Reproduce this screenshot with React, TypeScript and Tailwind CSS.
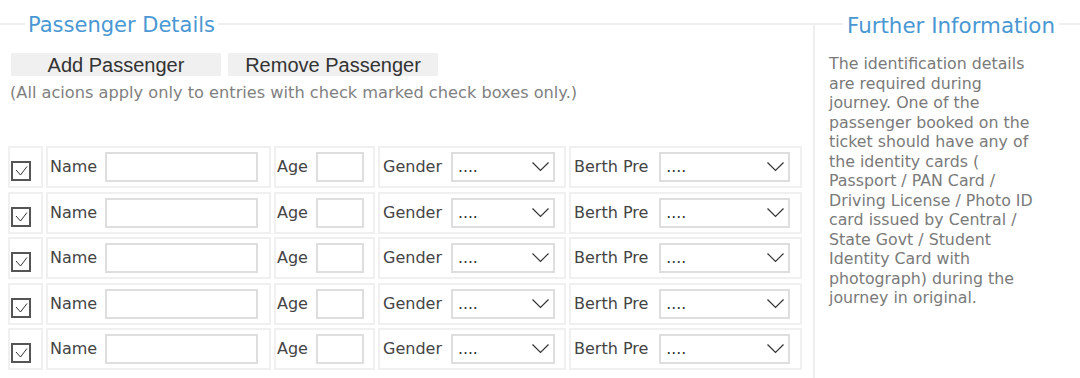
import React from "react";

const Check = () => (
  <svg width="20" height="20" viewBox="0 0 20 20" className="block">
    <rect x="1" y="1" width="18" height="18" fill="#fff" stroke="#555" strokeWidth="2" />
    <path d="M5 9 L9.5 14 L16 5.5" fill="none" stroke="#333" strokeWidth="1" />
  </svg>
);

const Chevron = () => (
  <svg width="17" height="10" viewBox="0 0 17 10" className="block">
    <path d="M0.5 0.5 L8.5 8.5 L16.5 0.5" fill="none" stroke="#333" strokeWidth="1.2" />
  </svg>
);

const Select = ({ w }: { w: string }) => (
  <div className={`${w} h-[30px] border-2 border-[#dedede] bg-white flex items-center justify-between pl-[5px] pr-[4px]`}>
    <span className="text-[15.6px] leading-none text-[#333] pt-[2px]">....</span>
    <Chevron />
  </div>
);

const Row = () => (
  <div className="flex gap-[3px] h-[42px]">
    <div className="w-[35px] border-2 border-[#f0f0f0] pl-[1px] pt-[13px]">
      <Check />
    </div>
    <div className="w-[225px] border-2 border-[#f0f0f0] flex items-center pl-[2px] gap-[8px]">
      <span>Name</span>
      <div className="w-[153px] h-[30px] border-2 border-[#dedede] bg-white" />
    </div>
    <div className="w-[101px] border-2 border-[#f0f0f0] flex items-center pl-[1px] gap-[8px]">
      <span>Age</span>
      <div className="w-[48px] h-[30px] border-2 border-[#dedede] bg-white" />
    </div>
    <div className="w-[188px] border-2 border-[#f0f0f0] flex items-center pl-[3px] gap-[9px]">
      <span>Gender</span>
      <Select w="w-[104px]" />
    </div>
    <div className="w-[233px] border-2 border-[#f0f0f0] flex items-center pl-[3px] gap-[11px]">
      <span>Berth Pre</span>
      <Select w="w-[131px]" />
    </div>
  </div>
);

const info = [
  "The identification details",
  "are required during",
  "journey. One of the",
  "passenger booked on the",
  "ticket should have any of",
  "the identity cards (",
  "Passport / PAN Card /",
  "Driving License / Photo ID",
  "card issued by Central /",
  "State Govt / Student",
  "Identity Card with",
  "photograph) during the",
  "journey in original.",
];

export default function App() {
  return (
    <div
      className="w-[1080px] h-[378px] overflow-hidden bg-white flex items-start"
      style={{ fontFamily: '"DejaVu Sans", Verdana, sans-serif' }}
    >
      <fieldset className="w-[813px] h-[400px] mt-[11px] border-t-2 border-[#efefef] min-w-0">
        <legend className="ml-[25px] px-[3px] pt-[4px] h-[25px] text-[21px] leading-[21px] text-[#4a98d3]">
          Passenger Details
        </legend>
        <div className="pt-[17px]">
          <div className="flex gap-[7px] pl-[11px]">
            {["Add Passenger", "Remove Passenger"].map((t) => (
              <div
                key={t}
                className="w-[210px] h-[23px] bg-[#f0f0f0] flex items-center justify-center text-[20px] leading-none text-[#333]"
                style={{ fontFamily: '"Liberation Sans", Arial, sans-serif' }}
              >
                {t}
              </div>
            ))}
          </div>
          <p className="mt-[7px] pl-[10px] text-[16.2px] leading-[19px] text-[#7f7f7f] whitespace-nowrap">
            (All acions apply only to entries with check marked check boxes only.)
          </p>
          <div className="mt-[44px] pl-[8px] flex flex-col gap-[3.5px] text-[16px] text-[#444]">
            <Row />
            <Row />
            <Row />
            <Row />
            <Row />
          </div>
        </div>
      </fieldset>
      <fieldset className="flex-1 h-[400px] mt-[11px] border-t-2 border-l-2 border-[#efefef] min-w-0">
        <legend className="ml-[28px] px-[4px] pt-[4px] h-[25px] text-[21.4px] leading-[21px] text-[#4a98d3]">
          Further Information
        </legend>
        <p className="pl-[14px] pt-[18px] text-[15.8px] leading-[19.5px] text-[#7a7a7a] whitespace-nowrap">
          {info.map((l, i) => (
            <React.Fragment key={i}>
              {l}
              {i < info.length - 1 && <br />}
            </React.Fragment>
          ))}
        </p>
      </fieldset>
    </div>
  );
}
